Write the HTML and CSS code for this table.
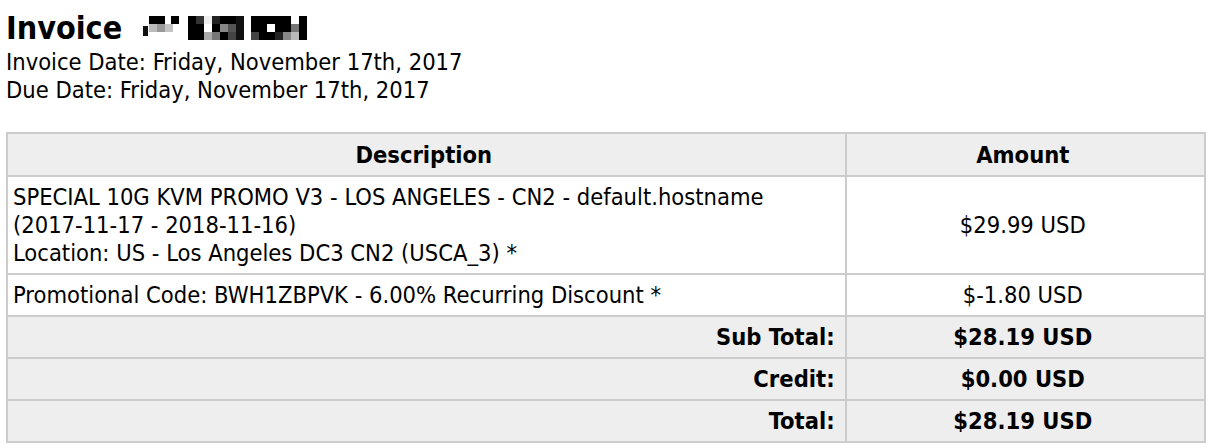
FILE: index.html
```html
<!DOCTYPE html>
<html lang="en">
<head>
    <meta charset="UTF-8">
    <title>Invoice</title>
    <link rel="stylesheet" href="styles.css">
</head>
<body>
    <h1 class="title">Invoice
        <svg class="redacted" width="170" height="26" viewBox="0 0 170 26" aria-label="invoice number hidden">
            <!-- pixelated invoice number -->
            <rect x="7" y="1" width="16" height="8" fill="#000"/>
            <rect x="29" y="1" width="8" height="8" fill="#000"/>
            <rect x="7" y="9" width="8" height="8" fill="#bbb"/>
            <rect x="15" y="9" width="8" height="8" fill="#999"/>
            <rect x="23" y="9" width="8" height="8" fill="#c4c4c4"/>
            <rect x="1" y="11" width="5" height="10" fill="#111"/>

            <rect x="46" y="1" width="8" height="24" fill="#000"/>
            <rect x="54" y="1" width="8" height="8" fill="#333"/>
            <rect x="54" y="9" width="8" height="16" fill="#000"/>
            <rect x="62" y="1" width="8" height="8" fill="#eee"/>
            <rect x="62" y="17" width="8" height="8" fill="#aaa"/>
            <rect x="70" y="1" width="8" height="8" fill="#222"/>
            <rect x="70" y="9" width="8" height="8" fill="#000"/>
            <rect x="70" y="17" width="8" height="8" fill="#777"/>
            <rect x="78" y="1" width="8" height="8" fill="#000"/>
            <rect x="78" y="9" width="8" height="8" fill="#888"/>
            <rect x="78" y="17" width="8" height="8" fill="#000"/>
            <rect x="86" y="1" width="8" height="8" fill="#000"/>
            <rect x="86" y="9" width="8" height="8" fill="#555"/>
            <rect x="86" y="17" width="8" height="8" fill="#444"/>
            <rect x="94" y="1" width="8" height="24" fill="#111"/>

            <rect x="109" y="1" width="16" height="16" fill="#000"/>
            <rect x="109" y="17" width="8" height="8" fill="#444"/>
            <rect x="117" y="17" width="8" height="8" fill="#000"/>
            <rect x="125" y="1" width="8" height="8" fill="#000"/>
            <rect x="125" y="9" width="8" height="8" fill="#fff"/>
            <rect x="125" y="17" width="8" height="8" fill="#000"/>
            <rect x="133" y="1" width="16" height="16" fill="#000"/>
            <rect x="133" y="17" width="8" height="8" fill="#222"/>
            <rect x="141" y="17" width="8" height="8" fill="#888"/>
            <rect x="149" y="9" width="8" height="8" fill="#777"/>
            <rect x="149" y="17" width="8" height="8" fill="#bbb"/>
            <rect x="157" y="1" width="8" height="24" fill="#000"/>
        </svg>
    </h1>
    <div class="dates">
        Invoice Date: Friday, November 17th, 2017<br>
        Due Date: Friday, November 17th, 2017
    </div>

    <table class="items">
        <tr class="head">
            <td class="desc">Description</td>
            <td class="amount">Amount</td>
        </tr>
        <tr>
            <td class="desc">SPECIAL 10G KVM PROMO V3 - LOS ANGELES - CN2 - default.hostname<br>(2017-11-17 - 2018-11-16)<br>Location: US - Los Angeles DC3 CN2 (USCA_3) *</td>
            <td class="amount">$29.99 USD</td>
        </tr>
        <tr>
            <td class="desc">Promotional Code: BWH1ZBPVK - 6.00% Recurring Discount *</td>
            <td class="amount">$-1.80 USD</td>
        </tr>
        <tr class="sum">
            <td class="label">Sub Total:</td>
            <td class="amount">$28.19 USD</td>
        </tr>
        <tr class="sum">
            <td class="label">Credit:</td>
            <td class="amount">$0.00 USD</td>
        </tr>
        <tr class="sum">
            <td class="label">Total:</td>
            <td class="amount">$28.19 USD</td>
        </tr>
    </table>
</body>
</html>
```

FILE: styles.css
```css
body { margin: 0; padding: 8px 6px; font-family: "DejaVu Sans Condensed", "DejaVu Sans", sans-serif; font-stretch: condensed; font-size: 23.5px; line-height: 28px; color: #000; background: #fff; }
.title { margin: 0; font-size: 32px; line-height: 40px; font-weight: bold; }
.redacted { vertical-align: -2px; margin-left: 10px; }
.dates { margin-bottom: 28px; }
.items { width: 100%; border-collapse: collapse; border: 2px solid #ccc; }
.items td { border: 2px solid #ccc; padding: 6px 10px 6px 5px; vertical-align: middle; }
.items .desc { width: 70%; text-align: left; }
.items .amount { width: 30%; text-align: center; }
.items .head td { background: #eee; font-weight: bold; text-align: center; padding-top: 7px; }
.items .sum td { background: #eee; font-weight: bold; }
.items .sum .label { text-align: right; }
```
